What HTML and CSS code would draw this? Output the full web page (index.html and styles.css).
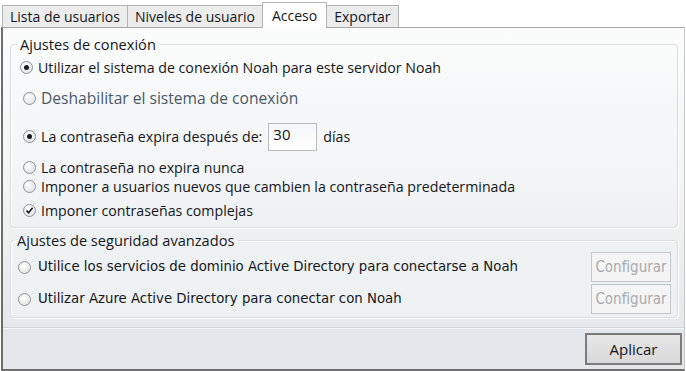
FILE: index.html
```html
<!DOCTYPE html>
<html lang="es">
<head>
  <meta charset="UTF-8">
  <title>Acceso</title>
  <link rel="stylesheet" href="styles.css">
</head>
<body>

  <!-- Tabs -->
  <div class="tabs">
    <div class="tab">Lista de usuarios</div>
    <div class="tab">Niveles de usuario</div>
    <div class="tab active">Acceso</div>
    <div class="tab">Exportar</div>
  </div>

  <div class="panel">

    <!-- Connection settings -->
    <fieldset class="group first">
      <legend>Ajustes de conexión</legend>
      <div class="row top">
        <span class="radio checked"></span>Utilizar el sistema de conexión Noah para este servidor Noah
      </div>
      <div class="row big">
        <span class="radio"></span>Deshabilitar el sistema de conexión
      </div>
      <div class="sub">
        <div class="row expire">
          <span class="radio checked"></span>La contraseña expira después de:
          <span class="days">30</span>
          días
        </div>
        <div class="row">
          <span class="radio"></span>La contraseña no expira nunca
        </div>
        <div class="row">
          <span class="radio"></span>Imponer a usuarios nuevos que cambien la contraseña predeterminada
        </div>
        <div class="row tall">
          <span class="radio">
            <svg width="9" height="9" viewBox="0 0 9 9"><path d="M1.5 4.6 L3.6 6.8 L7.6 1.8" fill="none" stroke="#1c1c1c" stroke-width="1.6"/></svg>
          </span>Imponer contraseñas complejas
        </div>
      </div>
    </fieldset>

    <!-- Advanced security -->
    <fieldset class="group second">
      <legend>Ajustes de seguridad avanzados</legend>
      <div class="adrow">
        <span class="radio"></span>
        <span class="label">Utilice los servicios de dominio Active Directory para conectarse a Noah</span>
        <button class="config" disabled>Configurar</button>
      </div>
      <div class="adrow">
        <span class="radio"></span>
        <span class="label">Utilizar Azure Active Directory para conectar con Noah</span>
        <button class="config" disabled>Configurar</button>
      </div>
    </fieldset>

    <div class="footer">
      <button class="apply">Aplicar</button>
    </div>
  </div>

</body>
</html>
```

FILE: styles.css
```css
body {
  margin: 0;
  width: 686px;
  height: 371px;
  background: #ffffff;
  font-family: "Open Sans", sans-serif;
  font-size: 14.2px;
  color: #15171c;
  overflow: hidden;
}
.tabs {
  display: flex;
  align-items: flex-end;
  height: 27px;
  padding-left: 2px;
}
.tab {
  height: 21px;
  padding: 0 7px;
  line-height: 21px;
  font-size: 14px;
  background: #ececec;
  border: 1px solid #b4b4b4;
  border-bottom: none;
  margin-right: -1px;
}
.tab.active {
  height: 25px;
  line-height: 25px;
  padding: 0 9px;
  background: #ffffff;
  position: relative;
  top: 1px;
  z-index: 1;
}
.panel {
  height: 344px;
  margin: 0 1px;
  border-top: 1px solid #a9a9a9;
  border-left: 2px solid #6d6d6d;
  border-right: 1px solid #c8c8c8;
  border-bottom: 2px solid #6d6d6d;
  background: linear-gradient(#fbfcfc, #f2f4f5 45%, #e4e8ea 90%);
  display: flex;
  flex-direction: column;
  padding: 6px 6px 0 7px;
  box-sizing: border-box;
}
.group {
  margin: 0;
  padding: 0 0 0 9px;
  border: 1px solid #d8dde0;
  border-radius: 4px;
  box-shadow: inset 1px 1px 0 #ffffff, 1px 1px 0 #ffffff;
  box-sizing: border-box;
}
.group legend {
  padding: 0 3px;
  margin-left: -3px;
  font-size: 14.6px;
  line-height: 21px;
  color: #15171c;
}
.group.first {
  height: 194px;
}
.group.second {
  margin-top: 2px;
  height: 88px;
  background: #eef1f2;
  padding-left: 6px;
}
.radio {
  display: inline-flex;
  align-items: center;
  justify-content: center;
  width: 11px;
  height: 11px;
  border-radius: 50%;
  border: 1px solid #8e9397;
  background: radial-gradient(circle at 40% 35%, #ffffff, #e6e7e8 70%, #d2d4d6);
  margin-right: 5px;
  flex-shrink: 0;
}
.radio.checked::after {
  content: "";
  width: 5px;
  height: 5px;
  border-radius: 50%;
  background: #1a1a1a;
}
.row {
  display: flex;
  align-items: center;
  height: 19px;
  white-space: nowrap;
}
.row.top {
  margin-top: 3px;
}
.row.big {
  height: 26px;
  margin-top: 8px;
  padding-left: 3px;
  font-size: 15.6px;
  color: #4a5868;
}
.sub {
  padding-left: 3px;
}
.row.expire {
  height: 33px;
  margin-top: 9px;
  margin-bottom: 5px;
}
.days {
  display: inline-block;
  width: 49px;
  height: 28px;
  margin: 0 6px 0 6px;
  padding-left: 4px;
  border: 1px solid #b8bcbf;
  background: linear-gradient(#f5f6f7, #ffffff);
  font-size: 15px;
  line-height: 20px;
  box-sizing: border-box;
}
.row.tall {
  height: 24px;
  margin-top: 2px;
}
.adrow {
  display: flex;
  align-items: center;
  height: 32px;
  padding-right: 6px;
}
.adrow .radio {
  margin-left: 1px;
  margin-right: 7px;
}
.adrow .label {
  flex: 1;
  font-family: "DejaVu Sans Condensed", "DejaVu Sans", sans-serif;
  font-size: 14.8px;
  white-space: nowrap;
  margin-top: -3px;
}
.config {
  width: 80px;
  height: 30px;
  padding: 0;
  font-family: "DejaVu Sans Condensed", "DejaVu Sans", sans-serif;
  font-size: 15px;
  color: #a8abad;
  background: #f4f4f4;
  border: 1px solid #c4c7c9;
}
.footer {
  flex: 1;
  display: flex;
  align-items: center;
  justify-content: flex-end;
  margin: 9px -6px 0 -7px;
  padding-right: 2px;
  border-top: 1px solid #cfd4d7;
  box-shadow: inset 0 1px 0 #f6f8f9;
}
.apply {
  width: 97px;
  height: 32px;
  font-family: "Open Sans", sans-serif;
  font-size: 15px;
  color: #15171c;
  background: linear-gradient(#e6e6e6, #d9d9d9);
  border: 2px solid #7c7c7c;
}
```
